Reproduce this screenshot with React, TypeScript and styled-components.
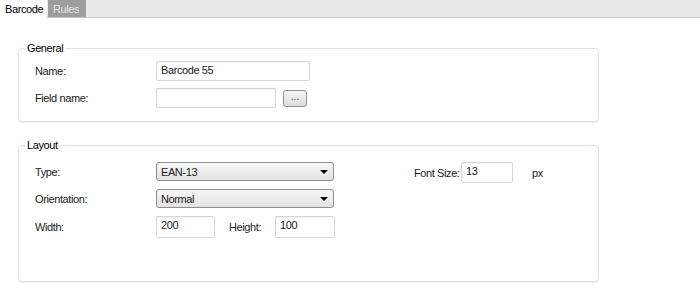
import React from 'react';
import styled, { createGlobalStyle } from 'styled-components';

const GlobalStyle = createGlobalStyle`
  body {
    margin: 0;
    background: #ffffff;
    font-family: "Liberation Sans", Arial, sans-serif;
    font-size: 11px;
    letter-spacing: -0.4px;
    color: #1a1a1a;
  }
`;

const Page = styled.div`
  width: 700px;
  height: 290px;
  overflow: hidden;
  background: #fff;
`;

const TabBar = styled.div`
  display: flex;
  height: 17px;
  background: #e9e9e9;
  border-bottom: 1px solid #c6c6c6;
`;

const Tab = styled.div<{ active?: boolean; w: number }>`
  box-sizing: border-box;
  width: ${p => p.w}px;
  height: ${p => (p.active ? '18px' : '17px')};
  line-height: 18px;
  padding-left: 5px;
  background: ${p => (p.active ? '#ffffff' : '#9d9d9d')};
  color: ${p => (p.active ? '#000' : '#e4e4e4')};
  margin-right: ${p => (p.active ? '1px' : '0')};
`;

const Content = styled.div`
  padding: 24px 0 0 18px;
  width: 581px;
  display: flex;
  flex-direction: column;
  gap: 17px;
`;

const Group = styled.fieldset`
  margin: 0;
  padding: 0;
  border: 1px solid #dbe2e8;
  border-radius: 4px;
  box-shadow: 0 1px 0 #eef1f3;
`;

const Legend = styled.legend`
  margin-left: 6px;
  padding: 0 2px;
  line-height: 13px;
  color: #000;
`;

const Body = styled.div<{ pt: number; pb: number }>`
  padding: ${p => p.pt}px 0 ${p => p.pb}px 16px;
  display: flex;
  align-items: flex-start;
`;

const Form = styled.div<{ gap: number }>`
  display: grid;
  grid-template-columns: 121px auto;
  row-gap: ${p => p.gap}px;
  align-items: center;
`;

const Label = styled.div`
  white-space: nowrap;
`;

const Inline = styled.div`
  display: flex;
  align-items: center;
`;

const TextBox = styled.div<{ w: number; h?: number }>`
  box-sizing: border-box;
  width: ${p => p.w}px;
  height: ${p => p.h ?? 20}px;
  border: 1px solid #d3d6d9;
  border-radius: 2px;
  background: #fff;
  padding: 1px 4px 0;
  line-height: 14px;
  box-shadow: inset 0 1px 0 #f4f4f4;
`;

const Browse = styled.div`
  box-sizing: border-box;
  width: 24px;
  height: 17px;
  margin-left: 7px;
  border: 1px solid #8e8f8f;
  border-radius: 3px;
  background: linear-gradient(#f6f6f6, #dcdcdc);
  color: #555;
  font-size: 10px;
  line-height: 12px;
  text-align: center;
  letter-spacing: 0;
`;

const Dropdown = styled.div`
  box-sizing: border-box;
  width: 178px;
  height: 19px;
  border: 1px solid #8c8c8c;
  border-radius: 3px;
  background: linear-gradient(#f7f7f7, #e2e2e2);
  display: flex;
  align-items: center;
  justify-content: space-between;
  padding: 0 5px 0 4px;
`;

const Arrow = styled.span`
  width: 0;
  height: 0;
  border-left: 4px solid transparent;
  border-right: 4px solid transparent;
  border-top: 4px solid #000;
`;

const SideLabel = styled.div<{ w: number }>`
  width: ${p => p.w}px;
  padding-left: 14px;
  box-sizing: border-box;
`;

const Aside = styled.div`
  margin-left: 79px;
  display: flex;
  align-items: center;
`;

const AsideLabel = styled.div`
  width: 47px;
  white-space: nowrap;
`;

const Unit = styled.span`
  margin-left: 19px;
`;

export default function App() {
  return (
    <Page>
      <GlobalStyle />
      <TabBar>
        <Tab active w={47}>Barcode</Tab>
        <Tab w={38}>Rules</Tab>
      </TabBar>
      <Content>
        <Group>
          <Legend>General</Legend>
          <Body pt={6} pb={13}>
            <Form gap={7}>
              <Label>Name:</Label>
              <TextBox w={154}>Barcode 55</TextBox>
              <Label>Field name:</Label>
              <Inline>
                <TextBox w={120}></TextBox>
                <Browse>...</Browse>
              </Inline>
            </Form>
          </Body>
        </Group>
        <Group>
          <Legend>Layout</Legend>
          <Body pt={10} pb={43}>
            <Form gap={8}>
              <Label>Type:</Label>
              <Dropdown>
                <span>EAN-13</span>
                <Arrow />
              </Dropdown>
              <Label>Orientation:</Label>
              <Dropdown>
                <span>Normal</span>
                <Arrow />
              </Dropdown>
              <Label>Width:</Label>
              <Inline>
                <TextBox w={59} h={22}>200</TextBox>
                <SideLabel w={60}>Height:</SideLabel>
                <TextBox w={60} h={22}>100</TextBox>
              </Inline>
            </Form>
            <Aside>
              <AsideLabel>Font Size:</AsideLabel>
              <TextBox w={52} h={21}>13</TextBox>
              <Unit>px</Unit>
            </Aside>
          </Body>
        </Group>
      </Content>
    </Page>
  );
}
